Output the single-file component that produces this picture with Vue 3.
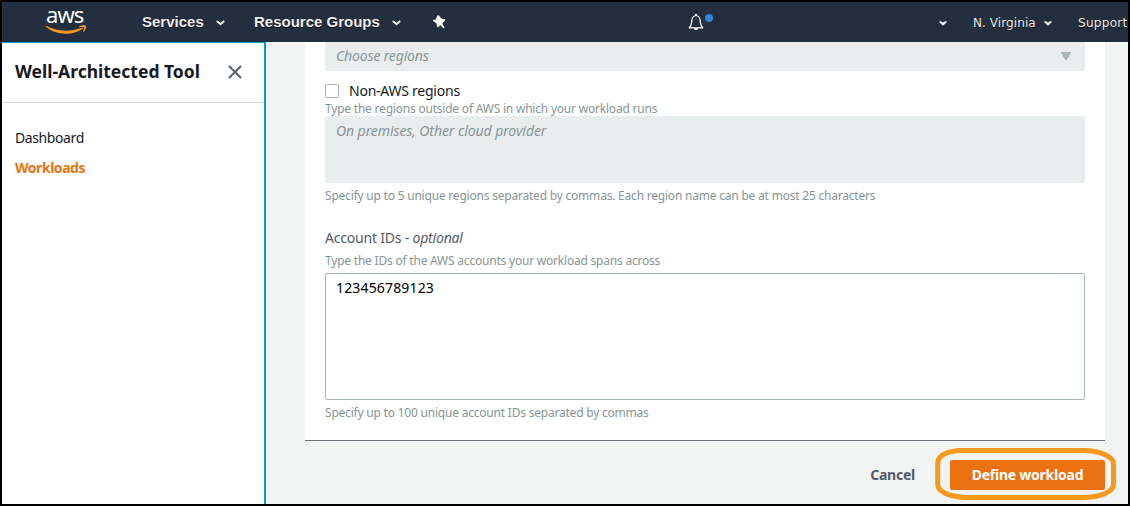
<script setup>
const links = [
  { label: 'Dashboard', active: false },
  { label: 'Workloads', active: true },
]
const accountIds = '123456789123'
</script>

<template>
  <div class="window">
    <header class="topbar">
      <div class="logo">
        <span class="logo-text">aws</span>
        <svg class="smile" width="42" height="10" viewBox="0 0 42 10">
          <path d="M0.6 1.6C0.3 1 0.9 0.7 1.5 1.1C12.5 6.9 25.5 7 36.7 2.8C37.6 2.4 38.2 3.2 37.4 3.9C27.5 10.8 11 10.6 0.6 1.6Z" fill="#f7981f" />
          <path d="M34.2 1.2C36.3 0 40.3 -0.1 40.9 0.7C41.5 1.6 40.4 5.4 38.6 7C38.2 7.3 37.9 7.1 38.1 6.6C38.7 5.1 39.3 3 38.9 2.4C38.4 1.8 36.1 1.9 34.6 2C34 2.1 33.8 1.5 34.2 1.2Z" fill="#f7981f" />
        </svg>
      </div>
      <span class="menu services">Services</span>
      <svg class="chev chev-a" width="9" height="6" viewBox="0 0 9 6"><path d="M0.8 1L4.5 4.3L8.2 1" fill="none" stroke="#eee" stroke-width="1.9" /></svg>
      <span class="menu groups">Resource Groups</span>
      <svg class="chev chev-b" width="9" height="6" viewBox="0 0 9 6"><path d="M0.8 1L4.5 4.3L8.2 1" fill="none" stroke="#eee" stroke-width="1.9" /></svg>
      <svg class="pin" width="13" height="14" viewBox="0 0 13 14">
        <path d="M4.4 0.2L6.2 0.4L6.9 2L9.6 4.2L11.6 3.9L12.4 5.1L9.4 8.2L11.4 12.8L10.5 13.4L7.2 10L5.3 12.2L3.8 11.6L3.8 8.8L1.7 6.9L0.5 6.6L0 4.9L2.8 4.4Z" fill="#fff" />
      </svg>
      <svg class="bell" width="28" height="19" viewBox="0 0 28 19">
        <path d="M1.2 14.9C3.9 12.2 3.4 10 4 6.5C4.4 4.2 5.8 2.8 8 2.5C10.2 2.8 11.6 4.2 12 6.5C12.6 10 12.1 12.2 14.8 14.9Z" fill="none" stroke="#fff" stroke-width="1.25" stroke-linejoin="round" />
        <path d="M7 1h2v1.6h-2zM5.8 15.3h4.4c-.3 2.4-4.1 2.4-4.4 0z" fill="#fff" />
        <circle cx="21" cy="5" r="4" fill="#3184de" />
      </svg>
      <svg class="chev chev-c" width="8" height="5" viewBox="0 0 8 5"><path d="M0.3 0.3H2L4 1.6L6 0.3H7.7V1.3L4 4.7L0.3 1.3Z" fill="#eee" /></svg>
      <span class="small region">N. Virginia</span>
      <svg class="chev chev-d" width="8" height="5" viewBox="0 0 8 5"><path d="M0.3 0.3H2L4 1.6L6 0.3H7.7V1.3L4 4.7L0.3 1.3Z" fill="#eee" /></svg>
      <span class="small support">Support</span>
    </header>

    <div class="body">
      <nav class="sidebar">
        <div class="side-head">
          <h1>Well-Architected Tool</h1>
          <svg width="14" height="14" viewBox="0 0 14 14"><path d="M1 1L13 13M13 1L1 13" stroke="#545b64" stroke-width="1.9" /></svg>
        </div>
        <ul>
          <li v-for="l in links" :key="l.label" :class="{ active: l.active }">{{ l.label }}</li>
        </ul>
      </nav>

      <main>
        <section class="card">
          <div class="select">
            <span class="ph choose">Choose regions</span>
            <svg width="10" height="8" viewBox="0 0 10 8"><path d="M0 0H10V1L5.6 8H4.4L0 1Z" fill="#aab7b8" /></svg>
          </div>
          <div class="check-row"><i class="box"></i><span class="check-text">Non-AWS regions</span></div>
          <p class="hint h-type">Type the regions outside of AWS in which your workload runs</p>
          <div class="area disabled"><span class="ph prem">On premises, Other cloud provider</span></div>
          <p class="hint h-five">Specify up to 5 unique regions separated by commas. Each region name can be at most 25 characters</p>
          <div class="label"><span>Account IDs - </span><em>optional</em></div>
          <p class="hint h-ids">Type the IDs of the AWS accounts your workload spans across</p>
          <div class="area editable">{{ accountIds }}</div>
          <p class="hint h-hundred">Specify up to 100 unique account IDs separated by commas</p>
        </section>
        <footer>
          <span class="cancel">Cancel</span>
          <div class="define">
            <span>Define workload</span>
            <svg class="ring" width="182" height="56" viewBox="0 0 182 56">
              <path d="M24 4.5L150 4.5C166 5 178.5 11 178.5 18V38C178.5 46 166 51 150 51.5H30C14 50.5 2.7 46 2.7 38V18C2.7 10 11 5.6 24 4.5Z" fill="none" stroke="#f8991d" stroke-width="5" />
            </svg>
          </div>
        </footer>
      </main>
    </div>
  </div>
</template>

<style>
html, body { margin: 0; overflow: hidden; }
</style>

<style scoped>
* { box-sizing: border-box; }
.window {
  width: 1130px; height: 506px; border: 2px solid #000; overflow: hidden;
  display: flex; flex-direction: column; background: #f2f3f3;
  font-family: "Noto Sans", sans-serif; font-size: 14px; letter-spacing: -0.24px; color: #16191f; white-space: nowrap;
}
.topbar { height: 40px; flex: none; background: #232f3e; display: flex; align-items: flex-start; }
.topbar > * { flex: none; }
.logo { width: 42px; margin-left: 43px; display: flex; flex-direction: column; }
.logo-text { height: 22px; line-height: 22px; margin-top: 1px; padding-left: 1px; font-size: 22px; letter-spacing: -0.9px; color: #fff; }
.smile { display: block; }
.menu { font: bold 15px/20px "Liberation Sans", Arial, sans-serif; letter-spacing: 0; color: #eee; margin-top: 10px; text-shadow: 0 1px 0 #000; }
.services { width: 62px; margin-left: 55px; }
.groups { width: 125px; margin-left: 29px; }
.chev { display: block; margin-top: 18px; }
.chev-a { margin-left: 12px; }
.chev-b { margin-left: 13px; }
.pin { margin: 13px 0 0 32px; }
.bell { margin: 11px 0 0 242px; }
.chev-c { margin: 19px 0 0 223px; }
.small { font: 12px/20px "DejaVu Sans", sans-serif; letter-spacing: 0.08px; color: #eee; margin-top: 11px; text-shadow: 0 1px 0 #000; }
.region { width: 63px; margin-left: 26px; }
.chev-d { margin: 19px 0 0 8px; }
.support { margin-left: 26px; letter-spacing: 0.3px; }
.body { flex: 1; display: flex; min-height: 0; }
.sidebar { width: 264px; flex: none; background: #fff; border-top: 1px solid #00a1c9; border-right: 2px solid #00a1c9; }
.side-head { height: 60px; display: flex; align-items: center; padding: 0 0 2px 13px; border-bottom: 1px solid #d5dbdb; }
.side-head h1 { margin: 0; padding-bottom: 1px; width: 213px; font-size: 17.5px; line-height: 24px; font-weight: 700; letter-spacing: 0; }
ul { list-style: none; margin: 20px 0 0 13px; padding: 0; }
li { height: 30px; line-height: 30px; letter-spacing: -0.4px; }
li.active { color: #ec7211; font-weight: 700; letter-spacing: -0.45px; }
main { flex: 1; padding-left: 39px; min-width: 0; }
.card { width: 800px; height: 399px; padding: 0 20px; background: #fff; border-bottom: 1px solid #687078; }
.select { height: 29px; background: #eaeded; border-radius: 0 0 2px 2px; display: flex; align-items: center; justify-content: space-between; padding: 0 14px 1px 11px; }
.ph { font-style: italic; color: #879596; letter-spacing: -0.08px; }
.choose { line-height: 20px; padding-bottom: 1px; letter-spacing: -0.15px; }
.check-row { height: 30px; margin-top: 5px; display: flex; align-items: center; gap: 10px; }
.check-text { line-height: 20px; padding-bottom: 1px; }
.box { width: 14px; height: 14px; border: 1px solid #aab7b8; border-radius: 2px; }
.hint { margin: 0; font-size: 12px; letter-spacing: -0.21px; line-height: 16px; height: 16px; color: #879596; }
.h-type { margin-top: -5px; }
.area { border-radius: 2px; padding: 5px 11px; line-height: 20px; }
.disabled { height: 67px; background: #eaeded; margin-top: -1px; }
.h-five { margin-top: 5px; }
.label { color: #545b64; height: 20px; line-height: 20px; margin-top: 24px; white-space: pre; letter-spacing: -0.2px; }
.h-ids { margin-top: 5px; }
.editable { height: 127px; border: 1px solid #aab7b8; padding: 4px 10px; margin-top: 4px; color: #000; letter-spacing: 0.16px; }
.h-hundred { margin-top: 5px; }
footer { width: 800px; display: flex; justify-content: flex-end; align-items: center; margin-top: 19px; height: 30px; font-weight: 700; }
.cancel { color: #545b64; margin-right: 35px; line-height: 30px; }
.define { position: relative; width: 155px; height: 30px; line-height: 30px; border-radius: 2px; background: #ec7211; color: #fff; text-align: center; }
.ring { position: absolute; left: -15px; top: -14px; }
</style>
